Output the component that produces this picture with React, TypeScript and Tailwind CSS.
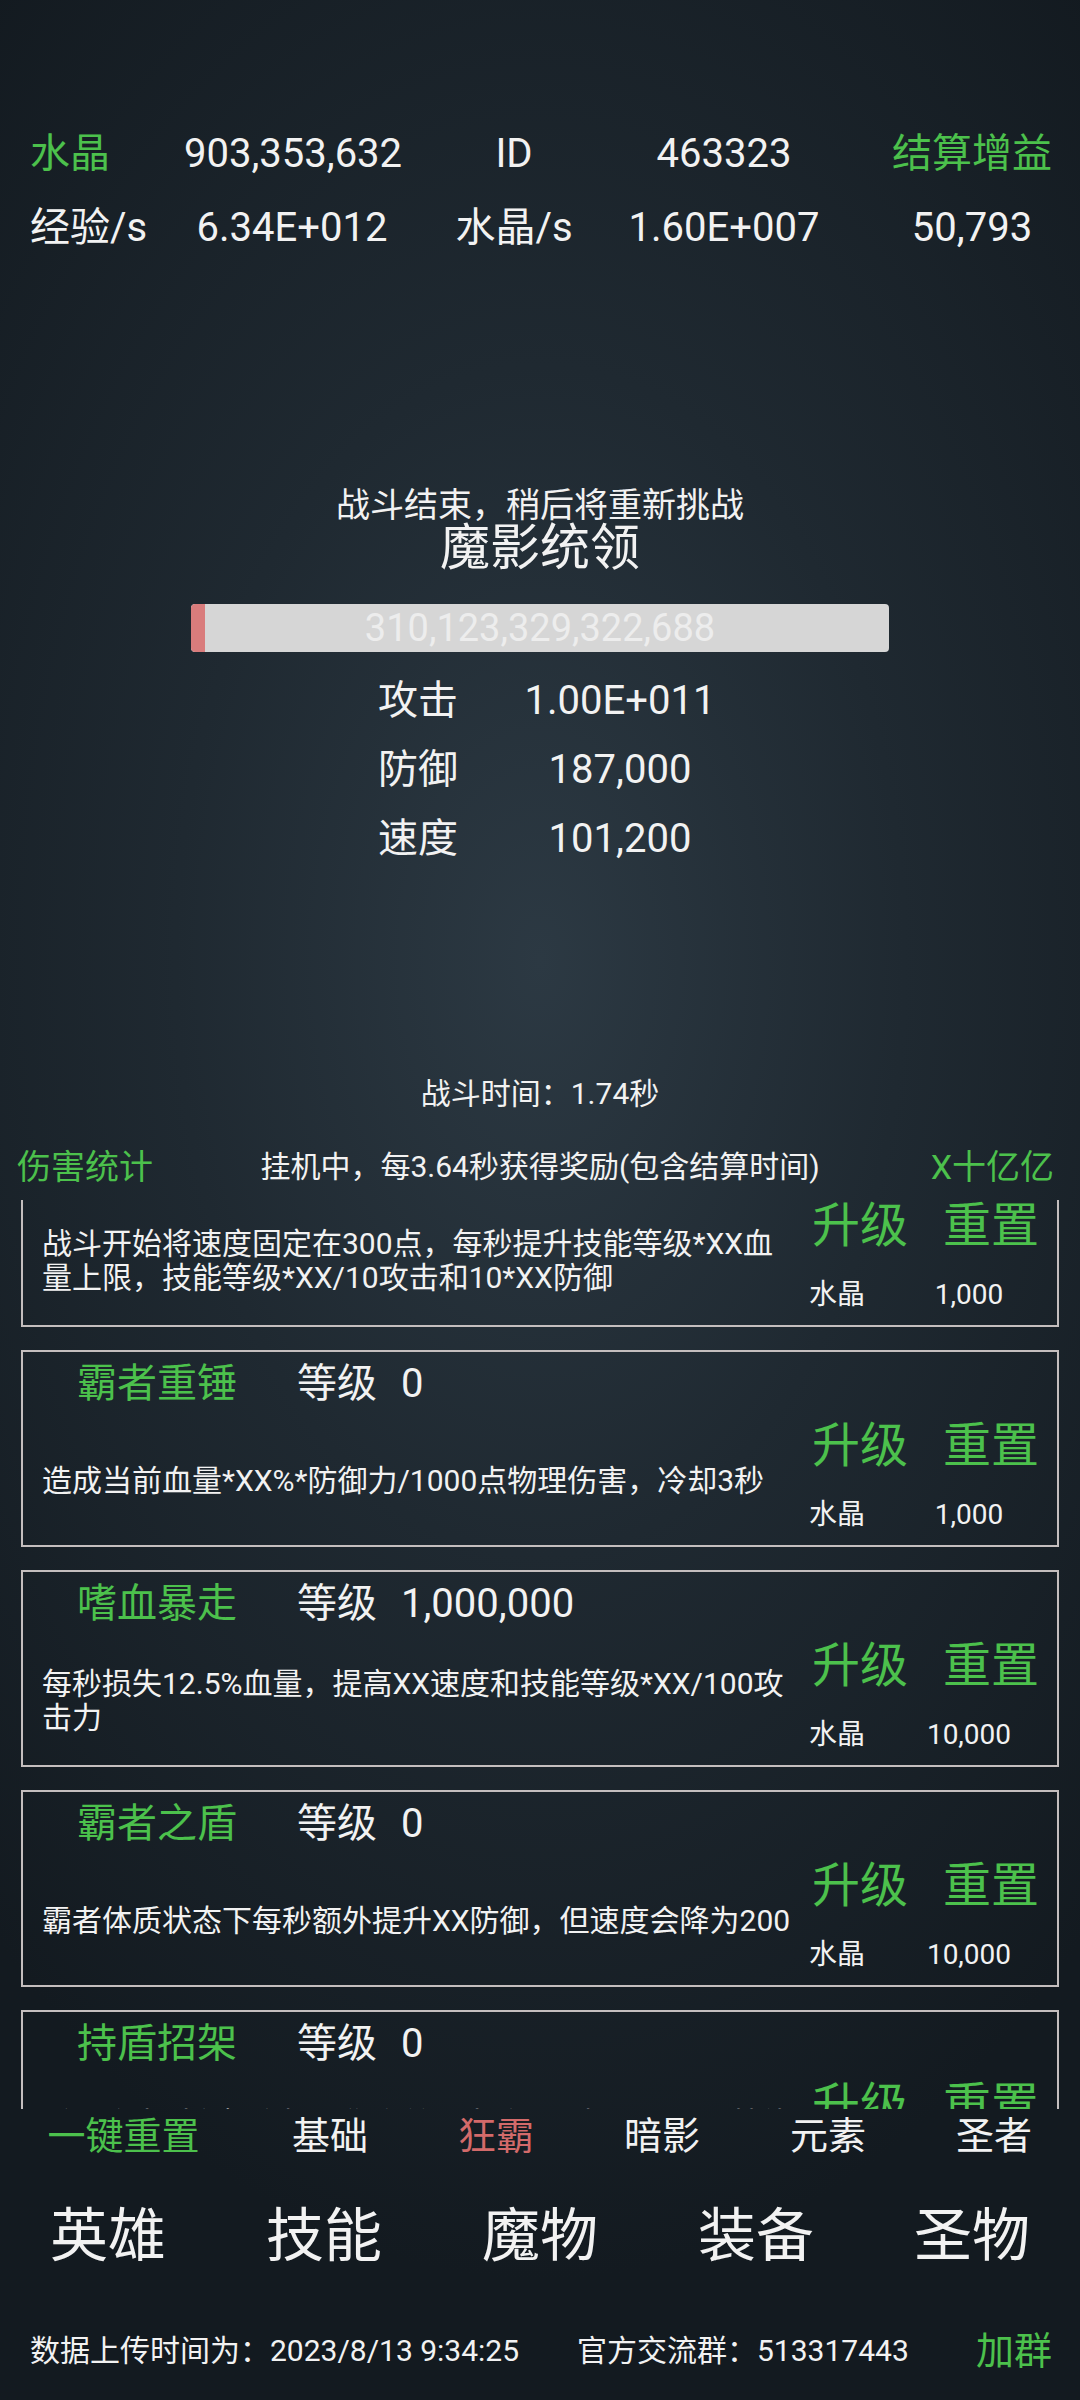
import React from "react";

const green = "text-[#4cc14c]";

const skills = [
  {
    name: "狂战霸体",
    level: "0",
    desc: "战斗开始将速度固定在300点，每秒提升技能等级*XX血量上限，技能等级*XX/10攻击和10*XX防御",
    cost: "1,000",
  },
  {
    name: "霸者重锤",
    level: "0",
    desc: "造成当前血量*XX%*防御力/1000点物理伤害，冷却3秒",
    cost: "1,000",
  },
  {
    name: "嗜血暴走",
    level: "1,000,000",
    desc: "每秒损失12.5%血量，提高XX速度和技能等级*XX/100攻击力",
    cost: "10,000",
  },
  {
    name: "霸者之盾",
    level: "0",
    desc: "霸者体质状态下每秒额外提升XX防御，但速度会降为200",
    cost: "10,000",
  },
  {
    name: "持盾招架",
    level: "0",
    desc: "受到攻击时有概率招架伤害并反击敌人，招架后提升技能等级*XX防御",
    cost: "10,000",
  },
];

const SkillCard = ({ s }: { s: (typeof skills)[number] }) => (
  <div className="flex h-[197px] shrink-0 flex-col border-2 border-[#c4bebe]">
    <div className="flex h-[64px] items-center pl-[54px] text-[40px] leading-[48px]">
      <span className={`w-[220px] ${green}`}>{s.name}</span>
      <span className="w-[104px]">等级</span>
      <span>{s.level}</span>
    </div>
    <div className="flex flex-1">
      <div className="flex w-[777px] items-center pl-[19px] text-[30px] leading-[34px]">
        <p>{s.desc}</p>
      </div>
      <div className="flex flex-col pt-[6px]">
        <div className={`flex h-[48px] items-center gap-[35px] pl-[12px] text-[48px] leading-[52px] ${green}`}>
          <span>升级</span>
          <span>重置</span>
        </div>
        <div className="mt-[29px] flex h-[32px] items-center pl-[9px] text-[28px] leading-[34px]">
          <span className="w-[91px]">水晶</span>
          <span className="w-[138px] text-center">{s.cost}</span>
        </div>
      </div>
    </div>
  </div>
);

const StatRow = ({ cells }: { cells: { t: string; c?: string }[] }) => (
  <div className="flex h-[74px] items-center text-[40px] leading-[48px]">
    <span className={`w-[184px] pl-[30px] ${cells[0].c ?? ""}`}>{cells[0].t}</span>
    <span className="w-[216px] text-center">{cells[1].t}</span>
    <span className="w-[228px] text-center">{cells[2].t}</span>
    <span className="w-[192px] text-center">{cells[3].t}</span>
    <span className={`ml-auto w-[216px] text-center ${cells[4].c ?? ""}`}>{cells[4].t}</span>
  </div>
);

export default function App() {
  return (
    <div className="flex h-[2400px] w-[1080px] flex-col overflow-hidden bg-[radial-gradient(ellipse_75%_55%_at_50%_40%,#2c3943_0%,#1f2931_45%,#131a20_100%)] font-[family-name:Roboto,'Noto_Sans_CJK_SC',sans-serif] text-[#f2f2f2]">
      <div className="pt-[117px]">
        <StatRow
          cells={[
            { t: "水晶", c: green },
            { t: "903,353,632" },
            { t: "ID" },
            { t: "463323" },
            { t: "结算增益", c: green },
          ]}
        />
        <StatRow
          cells={[
            { t: "经验/s" },
            { t: "6.34E+012" },
            { t: "水晶/s" },
            { t: "1.60E+007" },
            { t: "50,793" },
          ]}
        />
      </div>

      <div className="mt-[220px] flex flex-col items-center">
        <p className="text-[34px] leading-[40px]">战斗结束，稍后将重新挑战</p>
        <p className="text-[50px] leading-[46px]">魔影统领</p>
        <div className="relative mt-[33px] flex h-[48px] w-[698px] items-center justify-center overflow-hidden rounded-[4px] bg-[#d6d6d6]">
          <div className="absolute inset-y-0 left-0 w-[14px] rounded-l-[4px] bg-[#d97c7c]" />
          <span className="text-[38px] leading-[44px] text-[#ededed]">310,123,329,322,688</span>
        </div>
        <div className="mt-[14px] flex flex-col text-[40px] leading-[48px]">
          {[
            ["攻击", "1.00E+011"],
            ["防御", "187,000"],
            ["速度", "101,200"],
          ].map(([k, v]) => (
            <div key={k} className="flex h-[69px] items-center">
              <span className="w-[160px] text-center">{k}</span>
              <span className="w-[244px] text-center">{v}</span>
            </div>
          ))}
        </div>
      </div>

      <p className="mt-[201px] text-center text-[30px] leading-[40px]">战斗时间：1.74秒</p>

      <div className="mt-[33px] grid h-[40px] grid-cols-[1fr_auto_1fr] items-center">
        <span className={`pl-[17px] text-[34px] leading-[40px] ${green}`}>伤害统计</span>
        <span className="text-[30px] leading-[40px]">挂机中，每3.64秒获得奖励(包含结算时间)</span>
        <span className={`pr-[26px] text-right text-[34px] leading-[40px] ${green}`}>X十亿亿</span>
      </div>

      <div className="mt-[13px] h-[909px] overflow-hidden">
        <div className="-mt-[70px] flex flex-col gap-[23px] px-[21px]">
          {skills.map((s) => (
            <SkillCard key={s.name} s={s} />
          ))}
        </div>
      </div>

      <div className="grid h-[54px] grid-cols-[247px_repeat(5,166px)] items-center text-center text-[38px] leading-[44px]">
        <span className={green}>一键重置</span>
        <span>基础</span>
        <span className="text-[#d36a6a]">狂霸</span>
        <span>暗影</span>
        <span>元素</span>
        <span>圣者</span>
      </div>

      <div className="grid h-[146px] grid-cols-5 items-center text-center text-[58px] leading-[66px]">
        <span>英雄</span>
        <span>技能</span>
        <span>魔物</span>
        <span>装备</span>
        <span>圣物</span>
      </div>

      <div className="flex h-[84px] items-center text-[30px] leading-[40px]">
        <span className="w-[577px] pl-[30px]">数据上传时间为：2023/8/13 9:34:25</span>
        <span className="flex-1">官方交流群：513317443</span>
        <span className={`pr-[28px] text-[38px] leading-[44px] ${green}`}>加群</span>
      </div>
    </div>
  );
}
